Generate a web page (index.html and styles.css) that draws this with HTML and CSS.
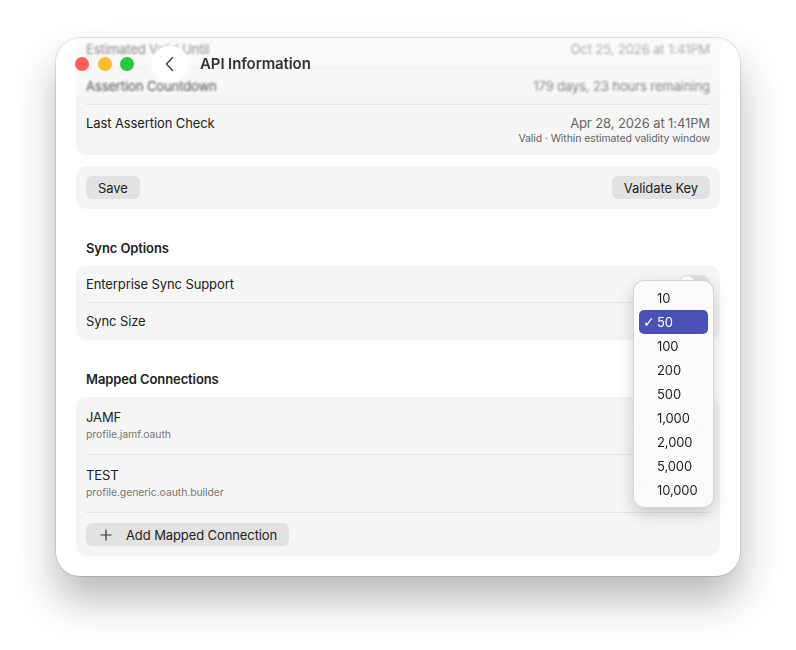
FILE: index.html
```html
<!DOCTYPE html>
<html lang="en">
<head>
  <meta charset="UTF-8" />
  <title>API Information</title>
  <link rel="stylesheet" href="styles.css">
</head>
<body>
  <div class="window">

    <div class="content">
      <div class="card first">
        <div class="row">
          <span>Estimated Valid Until</span>
          <span class="value">Oct 25, 2026 at 1:41PM</span>
        </div>
        <div class="row">
          <span>Assertion Countdown</span>
          <span class="value">179 days, 23 hours remaining</span>
        </div>
        <div class="row tall">
          <span>Last Assertion Check</span>
          <div class="value-stack">
            <span class="value">Apr 28, 2026 at 1:41PM</span>
            <span class="note">Valid · Within estimated validity window</span>
          </div>
        </div>
      </div>

      <div class="card actions">
        <button class="btn">Save</button>
        <button class="btn">Validate Key</button>
      </div>

      <h2 class="section-title">Sync Options</h2>
      <div class="card">
        <div class="row">
          <span>Enterprise Sync Support</span>
          <span class="toggle"></span>
        </div>
        <div class="row">
          <span>Sync Size</span>
          <span class="popup"></span>
        </div>
      </div>

      <h2 class="section-title">Mapped Connections</h2>
      <div class="card">
        <div class="row conn">
          <div class="conn-text">
            <span>JAMF</span>
            <span class="sub">profile.jamf.oauth</span>
          </div>
          <div class="icons">
            <svg width="14" height="14" viewBox="0 0 14 14"><path d="M2 12l1-3 7-7 2 2-7 7z" fill="none" stroke="#999" stroke-width="1.2"/></svg>
            <svg width="14" height="14" viewBox="0 0 14 14"><path d="M3 4h8M5 4V2.5h4V4M4 4l.6 8h4.8L10 4" fill="none" stroke="#999" stroke-width="1.2"/></svg>
          </div>
        </div>
        <div class="row conn">
          <div class="conn-text">
            <span>TEST</span>
            <span class="sub">profile.generic.oauth.builder</span>
          </div>
          <div class="icons">
            <svg width="14" height="14" viewBox="0 0 14 14"><path d="M2 12l1-3 7-7 2 2-7 7z" fill="none" stroke="#999" stroke-width="1.2"/></svg>
            <svg width="14" height="14" viewBox="0 0 14 14"><path d="M3 4h8M5 4V2.5h4V4M4 4l.6 8h4.8L10 4" fill="none" stroke="#999" stroke-width="1.2"/></svg>
          </div>
        </div>
        <div class="row add-row">
          <button class="btn add">
            <svg width="12" height="12" viewBox="0 0 12 12"><path d="M6 1v10M1 6h10" stroke="#333" stroke-width="1.2" stroke-linecap="round"/></svg>
            Add Mapped Connection
          </button>
        </div>
      </div>
    </div>

    <div class="toolbar">
      <div class="lights">
        <span class="light red"></span>
        <span class="light yellow"></span>
        <span class="light green"></span>
      </div>
      <div class="back">
        <svg width="12" height="16" viewBox="0 0 12 16"><path d="M8.5 1.5L2.5 8l6 6.5" fill="none" stroke="#444" stroke-width="1.5" stroke-linecap="round" stroke-linejoin="round"/></svg>
      </div>
      <div class="title">API Information</div>
    </div>

    <ul class="menu">
      <li>10</li>
      <li class="selected"><span class="check">✓</span>50</li>
      <li>100</li>
      <li>200</li>
      <li>500</li>
      <li>1,000</li>
      <li>2,000</li>
      <li>5,000</li>
      <li>10,000</li>
    </ul>

  </div>
</body>
</html>
```

FILE: styles.css
```css
* { margin: 0; padding: 0; box-sizing: border-box; }

body {
  background: #fff;
  font-family: Inter, 'Noto Sans', sans-serif;
  font-size: 13px;
  letter-spacing: -0.1px;
  color: #222;
  padding: 38px 56px;
  width: 796px;
  height: 650px;
  overflow: hidden;
}

.window {
  position: relative;
  width: 684px;
  height: 538px;
  background: #fff;
  border-radius: 24px;
  overflow: hidden;
  box-shadow: 0 24px 40px rgba(0, 0, 0, 0.28), 0 0 0 1px rgba(0, 0, 0, 0.1);
}

/* content is scrolled a little, first row sits under the toolbar */
.content {
  padding: 0 20px;
  margin-top: -7px;
}

.card {
  background: #f5f5f5;
  border-radius: 10px;
  padding: 0 10px;
}

.card + .card { margin-top: 11px; }

.row {
  display: flex;
  justify-content: space-between;
  align-items: center;
  min-height: 37px;
  line-height: 17px;
  border-bottom: 1px solid #e4e4e4;
}

.row:last-child { border-bottom: none; }

.row.tall {
  align-items: flex-start;
  padding: 10px 0 9px;
}

.value { color: #666; }

.value-stack {
  display: flex;
  flex-direction: column;
  align-items: flex-end;
}

.note {
  font-size: 10.5px;
  line-height: 14px;
  color: #666;
}

.actions {
  display: flex;
  justify-content: space-between;
  padding: 10px;
}

.btn {
  font-family: inherit;
  font-size: 13px;
  letter-spacing: -0.1px;
  color: #222;
  background: #e2e2e2;
  border: none;
  border-radius: 6px;
  height: 23px;
  padding: 0 12px;
}

.section-title {
  font-size: 13px;
  font-weight: 600;
  line-height: 17px;
  padding: 0 10px;
  margin: 31px 0 9px;
  color: #222;
}

.toggle {
  width: 32px;
  height: 18px;
  border-radius: 9px;
  background: #e1e1e1;
  position: relative;
}

.toggle::after {
  content: "";
  position: absolute;
  left: 1px;
  top: 1px;
  width: 16px;
  height: 16px;
  border-radius: 50%;
  background: #fff;
  box-shadow: 0 1px 2px rgba(0, 0, 0, 0.2);
}

.popup {
  width: 60px;
  height: 21px;
  border-radius: 6px;
  background: #e2e2e2;
}

.row.conn {
  padding: 12px 0;
}

.conn-text {
  display: flex;
  flex-direction: column;
  gap: 3px;
}

.conn-text span { line-height: 16px; }

.sub {
  font-size: 10.5px;
  line-height: 14px !important;
  color: #777;
}

.icons {
  display: flex;
  gap: 44px;
  padding-right: 4px;
}

.add-row { padding: 10px 0; }

.btn.add {
  display: flex;
  align-items: center;
  gap: 14px;
  padding: 0 12px 0 14px;
}

/* toolbar floats over scrolled content */
.toolbar {
  position: absolute;
  top: 0;
  left: 0;
  right: 0;
  height: 64px;
  display: flex;
  align-items: flex-start;
  padding: 8px 0 0 19px;
  background: linear-gradient(rgba(255, 255, 255, 0.55), rgba(255, 255, 255, 0.15));
  backdrop-filter: blur(1.3px);
  -webkit-mask-image: linear-gradient(#000 88%, transparent);
}

.lights {
  display: flex;
  gap: 8.5px;
  margin-top: 11px;
}

.light {
  width: 14px;
  height: 14px;
  border-radius: 50%;
}

.red { background: #ff5f57; }
.yellow { background: #febc2e; }
.green { background: #28c840; }

.back {
  width: 36px;
  height: 36px;
  border-radius: 50%;
  background: #fff;
  margin-left: 18px;
  display: flex;
  align-items: center;
  justify-content: center;
  box-shadow: 0 0 6px rgba(255, 255, 255, 0.9);
}

.title {
  margin-left: 12px;
  margin-top: 8px;
  font-size: 15px;
  font-weight: 600;
  color: #333;
}

/* open popup menu */
.menu {
  position: absolute;
  left: 577px;
  top: 242px;
  width: 81px;
  list-style: none;
  padding: 5px;
  border-radius: 11px;
  background: rgba(252, 252, 252, 0.9);
  backdrop-filter: blur(4px);
  border: 0.5px solid rgba(0, 0, 0, 0.15);
  box-shadow: 0 6px 16px rgba(0, 0, 0, 0.18);
}

.menu li {
  position: relative;
  height: 24px;
  line-height: 24px;
  padding-left: 18px;
  border-radius: 5px;
  color: #222;
}

.menu li.selected {
  background: #4a52b8;
  color: #fff;
}

.check {
  position: absolute;
  left: 4px;
  font-size: 14px;
  font-weight: 600;
  font-family: 'DejaVu Sans', sans-serif;
}
```
